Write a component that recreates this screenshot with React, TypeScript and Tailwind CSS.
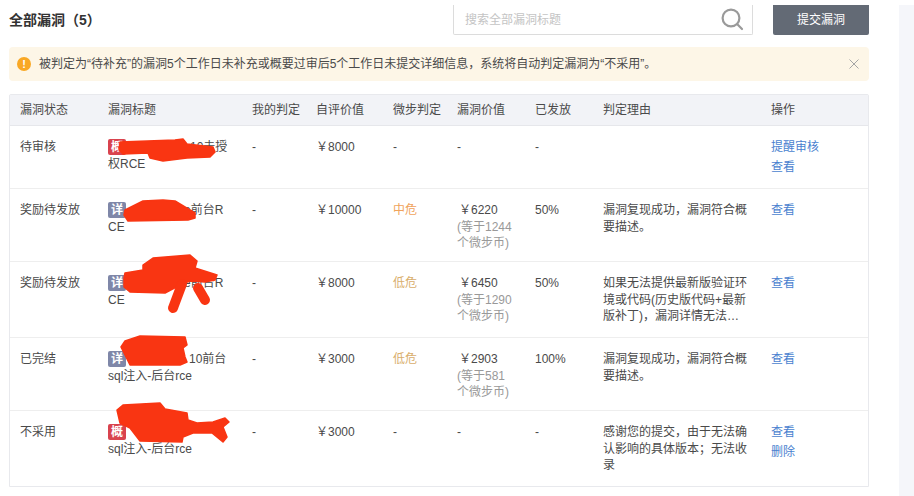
const GRID = "grid grid-cols-[88px_144px_64px_77px_64px_78px_68px_168px_107px]";

function Badge({ kind }: { kind: "详" | "概" }) {
  return (
    <span
      className={`inline-flex items-center justify-center w-[18px] h-[16px] -my-[2px] mr-[3px] rounded-[2px] text-white align-baseline font-bold ${
        kind === "详" ? "bg-[#7f87a8]" : "bg-[#d9434e]"
      }`}
    >
      {kind}
    </span>
  );
}

function Money({ v, coin }: { v: string; coin?: string }) {
  return (
    <div>
      <div className="pl-[2px]">￥{v}</div>
      {coin && <div className="text-[#999999] w-[60px]">(等于{coin}个微步币)</div>}
    </div>
  );
}

type Row = {
  h: string;
  status: string;
  kind: "详" | "概";
  gap: string;
  title: string;
  self: string;
  judge: string;
  judgeColor?: string;
  value?: string;
  coin?: string;
  paid: string;
  reason: string;
  ops: string[];
};

const rows: Row[] = [
  { h: "h-[63px]", status: "待审核", kind: "概", gap: "w-[61px]", title: "10未授权RCE", self: "8000", judge: "-", paid: "-", reason: "", ops: ["提醒审核", "查看"] },
  { h: "h-[73px]", status: "奖励待发放", kind: "详", gap: "w-[55px]", title: "e前台RCE", self: "10000", judge: "中危", judgeColor: "text-[#f0a35c]", value: "6220", coin: "1244", paid: "50%", reason: "漏洞复现成功，漏洞符合概要描述。", ops: ["查看"] },
  { h: "h-[76px]", status: "奖励待发放", kind: "详", gap: "w-[55px]", title: "e前台RCE", self: "8000", judge: "低危", judgeColor: "text-[#d9ae6c]", value: "6450", coin: "1290", paid: "50%", reason: "如果无法提供最新版验证环境或代码(历史版代码+最新版补丁)，漏洞详情无法…", ops: ["查看"] },
  { h: "h-[73px]", status: "已完结", kind: "详", gap: "w-[60px]", title: "10前台sql注入-后台rce", self: "3000", judge: "低危", judgeColor: "text-[#d9ae6c]", value: "2903", coin: "581", paid: "100%", reason: "漏洞复现成功，漏洞符合概要描述。", ops: ["查看"] },
  { h: "h-[75px]", status: "不采用", kind: "概", gap: "w-[99px]", title: "sql注入-后台rce", self: "3000", judge: "-", paid: "-", reason: "感谢您的提交，由于无法确认影响的具体版本；无法收录", ops: ["查看", "删除"] },
];

const heads = ["漏洞状态", "漏洞标题", "我的判定", "自评价值", "微步判定", "漏洞价值", "已发放", "判定理由", "操作"];

export default function App() {
  return (
    <div className="relative w-[914px] h-[496px] overflow-hidden bg-white flex text-[12px] leading-[16.7px] text-[#4a4a4a] font-['Liberation_Sans','Noto_Sans_CJK_SC',sans-serif]">
      <main className="w-[899px] pl-[9px] shrink-0">
        <header className="w-[860px] h-[47px] pt-[5px] flex items-start">
          <h1 className="flex-1 pt-[5px] text-[14px] leading-[20px] font-bold text-[#333333]">全部漏洞（5）</h1>
          <div className="w-[300px] h-[30px] border-x border-b border-[#dcdcdc] rounded-b-[2px] flex items-center justify-between pl-[11px] pr-[8px] text-[#c4c4c4]">
            <span className="pt-[1px]">搜索全部漏洞标题</span>
            <svg width="23" height="23" viewBox="0 0 23 23" fill="none" stroke="#9a9a9a" strokeWidth="2.2" strokeLinecap="round">
              <circle cx="10" cy="10" r="8.4" />
              <path d="M16.3 16.3 L21 21" />
            </svg>
          </div>
          <button className="ml-[20px] w-[96px] h-[30px] pt-[1px] bg-[#636a75] rounded-b-[2px] text-white text-[12px]">提交漏洞</button>
        </header>

        <div className="w-[860px] h-[34px] rounded-[4px] bg-[#fdf6e7] flex items-center pl-[8px] pr-[8px]">
          <span className="w-[14px] h-[14px] rounded-full bg-[#f9a825] text-white text-[11px] leading-[14px] font-bold text-center">!</span>
          <span className="ml-[8px] flex-1 pt-[1px]">被判定为“待补充”的漏洞5个工作日未补充或概要过审后5个工作日未提交详细信息，系统将自动判定漏洞为“不采用”。</span>
          <svg width="12" height="12" viewBox="0 0 12 12" stroke="#a5a5a5" strokeWidth="1" fill="none" className="mr-[1px]">
            <path d="M1.5 1.5 L10.5 10.5 M10.5 1.5 L1.5 10.5" />
          </svg>
        </div>

        <section className="w-[860px] mt-[13px] border border-[#e8e9ed] rounded-t-[2px]">
          <div className={`${GRID} h-[31px] pt-[1px] items-center bg-[#f2f3f7] border-b border-[#e6e7eb] text-[#4a4a4a]`}>
            {heads.map((h) => (
              <div key={h} className="pl-[10px]">{h}</div>
            ))}
          </div>
          {rows.map((r, i) => (
            <div key={i} className={`${GRID} ${r.h} pt-[13px] ${i < rows.length - 1 ? "border-b border-[#eeeeee]" : ""}`}>
              <div className="pl-[10px]">{r.status}</div>
              <div className="pl-[10px] pr-[14px] break-all">
                <Badge kind={r.kind} />
                <span className={`inline-block h-[1px] ${r.gap}`} />
                {r.title}
              </div>
              <div className="pl-[10px]">-</div>
              <div className="pl-[10px]">￥{r.self}</div>
              <div className={`pl-[10px] ${r.judgeColor ?? ""}`}>{r.judge}</div>
              <div className="pl-[10px]">{r.value ? <Money v={r.value} coin={r.coin} /> : "-"}</div>
              <div className="pl-[10px]">{r.paid}</div>
              <div className="pl-[10px] pr-[12px] h-fit">{r.reason}</div>
              <div className="pl-[10px] leading-[20px] -mt-[2px] text-[#4a7fcf]">
                {r.ops.map((o) => (
                  <div key={o}>{o}</div>
                ))}
              </div>
            </div>
          ))}
        </section>
      </main>
      <aside className="flex-1 mt-[5px] bg-[#f5f6fa]" />

      <svg className="absolute inset-0 pointer-events-none" width="914" height="496" viewBox="0 0 914 496" fill="#f93512" stroke="#f93512" strokeWidth="1.5" strokeLinecap="round" strokeLinejoin="round">
        <polygon points="120,142 175,140 183,139 187,144 213,147 215,152 210,157 187,158 163,161 150,158 148,153 123,154 119,150" />
        <polygon points="125,210 143,201 163,200 175,201 195,213 195,218 188,220 128,221 124,215" />
        <polygon points="125,273 143,270 143,265 153,258 190,255 197,261 195,268 217,275 215,280 205,282 190,281 182,284 165,293 130,292 124,287 124,278" />
        <path d="M182 284 L173 308" strokeWidth="10" fill="none" />
        <path d="M198 288 L205 300" strokeWidth="10" fill="none" />
        <polygon points="121,347 125,341 140,336 185,337 187,345 183,348 185,357 187,362 180,365 130,365 126,357" />
        <polygon points="117,410 123,405 160,403 165,409 187,413 188,420 197,423 213,422 225,418 229,422 223,427 227,437 223,442 212,433 193,433 183,437 182,442 140,441 130,428 120,423" />
      </svg>
    </div>
  );
}
